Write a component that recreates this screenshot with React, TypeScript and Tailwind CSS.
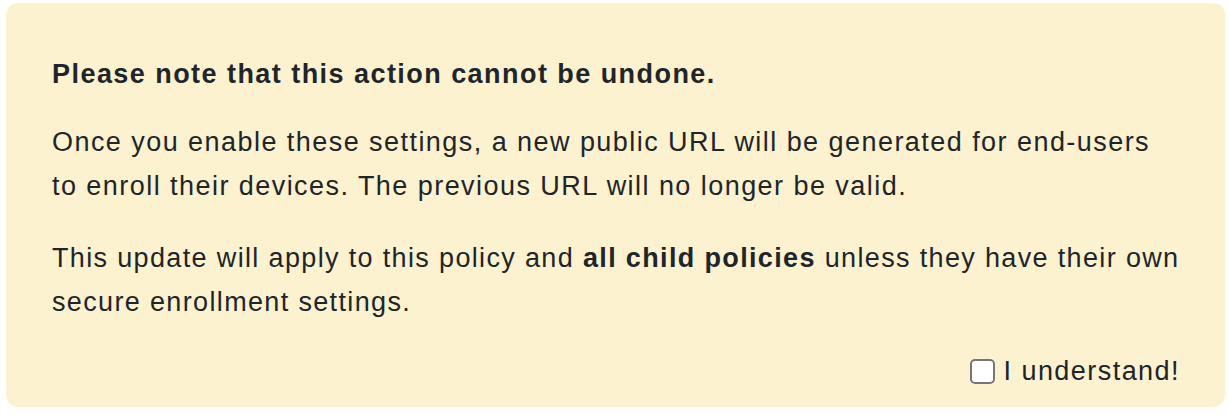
import { useState } from "react";

export default function App() {
  const [checked, setChecked] = useState(false);

  return (
    <div className="w-[1228px] h-[416px] bg-white pt-[3px] pl-[6px] pr-[3px] font-['Liberation_Sans',Arial,sans-serif] text-[#212529] tracking-[1.45px]">
      <div className="h-[404px] rounded-[12px] bg-[#fcf2d0] pl-[46px] pr-[40px] pt-[49px]">
        <p className="text-[27px] leading-[44px] font-bold whitespace-nowrap">Please note that this action cannot be undone.</p>
        <p className="mt-[24px] text-[27px] leading-[44px] whitespace-nowrap">
          Once you enable these settings, a new public URL will be generated for end-users
          <br />
          to enroll their devices. The previous URL will no longer be valid.
        </p>
        <p className="mt-[28px] text-[27px] leading-[44px] whitespace-nowrap tracking-[1.35px]">
          This update will apply to this policy and <b>all child policies</b> unless they have their own
          <br />
          secure enrollment settings.
        </p>
        <div className="mt-[25px] pr-[5px] flex justify-end">
          <label className="flex items-center gap-[9px] text-[27px] leading-[44px] cursor-pointer whitespace-nowrap">
            <span
              onClick={() => setChecked(!checked)}
              className="w-[25px] h-[25px] rounded-[5px] border-2 border-[#767676] bg-white"
            />
            I understand!
          </label>
        </div>
      </div>
    </div>
  );
}
